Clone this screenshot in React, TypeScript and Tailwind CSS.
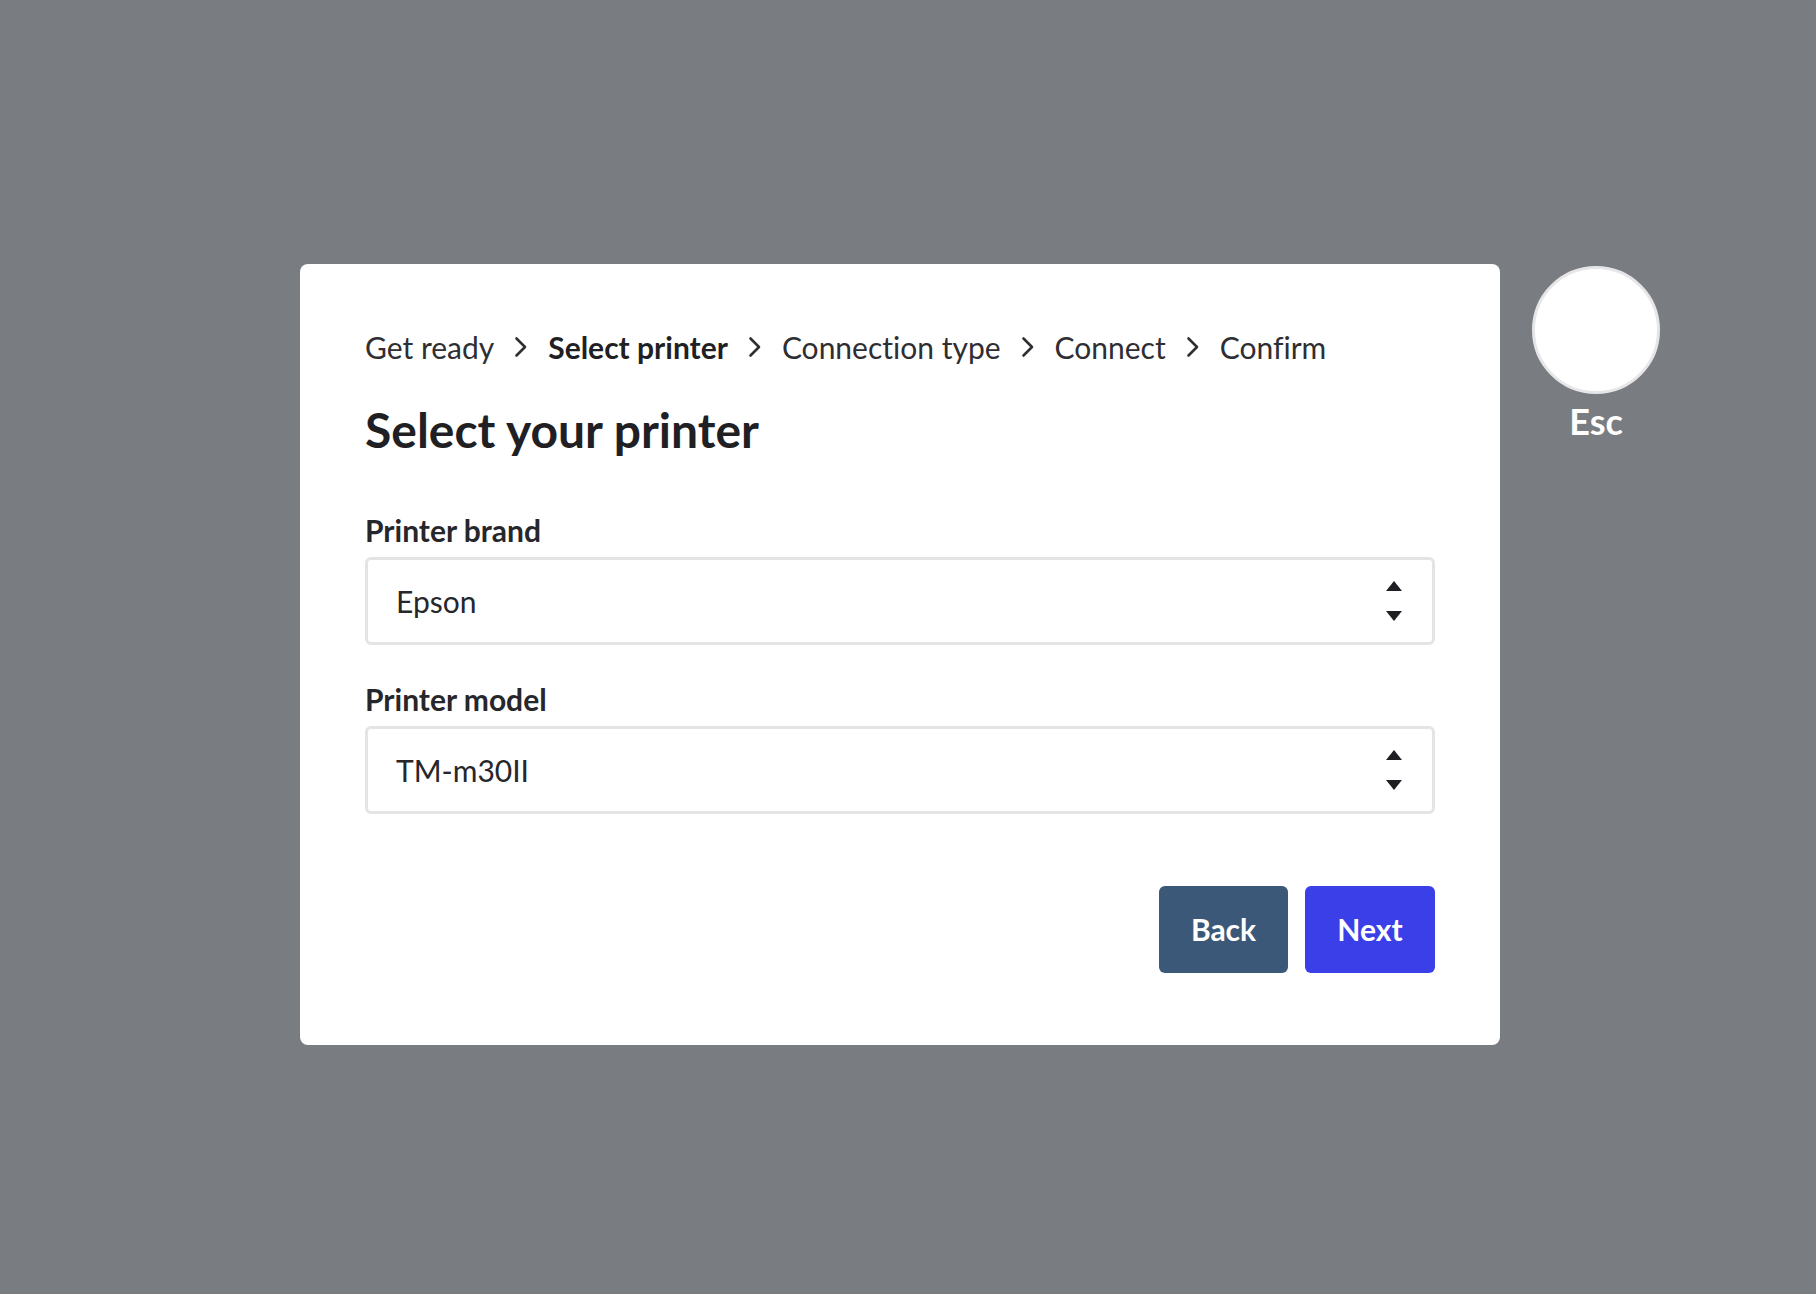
import React from 'react';

const steps = ['Get ready', 'Select printer', 'Connection type', 'Connect', 'Confirm'];
const activeStep = 1;

const Chevron = () => (
  <svg width="14" height="22" viewBox="0 0 14 22" fill="none" className="mx-[20px]">
    <path d="M2.5 2.5 L11 11 L2.5 19.5" stroke="#2e2e33" strokeWidth="2.6" strokeLinecap="round" strokeLinejoin="round" />
  </svg>
);

const SelectField: React.FC<{ label: string; value: string }> = ({ label, value }) => (
  <div className="flex flex-col">
    <label className="text-[30px] font-bold text-[#26262b] leading-[36px] mb-[9px]">{label}</label>
    <div className="flex items-center justify-between h-[88px] border-[3px] border-[#e4e4e7] rounded-[6px] pl-[28px] pr-[30px]">
      <span className="text-[30px] text-[#26262b]">{value}</span>
      <div className="flex flex-col items-center gap-[20px]">
        <svg width="16" height="10" viewBox="0 0 16 10">
          <path d="M8 0 L16 10 L0 10 Z" fill="#1f1f23" />
        </svg>
        <svg width="16" height="10" viewBox="0 0 16 10">
          <path d="M0 0 L16 0 L8 10 Z" fill="#1f1f23" />
        </svg>
      </div>
    </div>
  </div>
);

export default function App() {
  return (
    <div
      className="min-h-[1294px] w-full bg-[#797d81] flex items-start pl-[300px] pt-[264px] gap-[32px] [font-variant-ligatures:none]"
      style={{ fontFamily: 'Lato, "Noto Sans", sans-serif' }}
    >
      <div className="w-[1200px] bg-white rounded-[8px] px-[65px] pt-[64px] pb-[72px] flex flex-col">
        <nav className="flex items-center text-[30px] text-[#2e2e33] leading-[38px]">
          {steps.map((step, i) => (
            <React.Fragment key={step}>
              {i > 0 && <Chevron />}
              <span className={i === activeStep ? 'font-bold text-[#1f1f24]' : ''}>{step}</span>
            </React.Fragment>
          ))}
        </nav>
        <h1 className="mt-[36px] text-[48px] font-bold text-[#1f1f24] leading-[56px]">Select your printer</h1>
        <div className="mt-[54px] flex flex-col gap-[36px]">
          <SelectField label="Printer brand" value="Epson" />
          <SelectField label="Printer model" value="TM-m30II" />
        </div>
        <div className="mt-[72px] flex justify-end gap-[17px]">
          <button className="w-[129px] h-[87px] rounded-[6px] bg-[#3b5878] text-white text-[30px] font-bold">Back</button>
          <button className="w-[130px] h-[87px] rounded-[6px] bg-[#3a3fe8] text-white text-[30px] font-bold">Next</button>
        </div>
      </div>
      <div className="flex flex-col items-center pt-[2px]">
        <button className="w-[128px] h-[128px] rounded-full bg-white border-[3px] border-[#e6e6e8]" aria-label="Esc" />
        <span className="mt-[5px] text-[36px] font-bold text-white leading-[44px]">Esc</span>
      </div>
    </div>
  );
}
